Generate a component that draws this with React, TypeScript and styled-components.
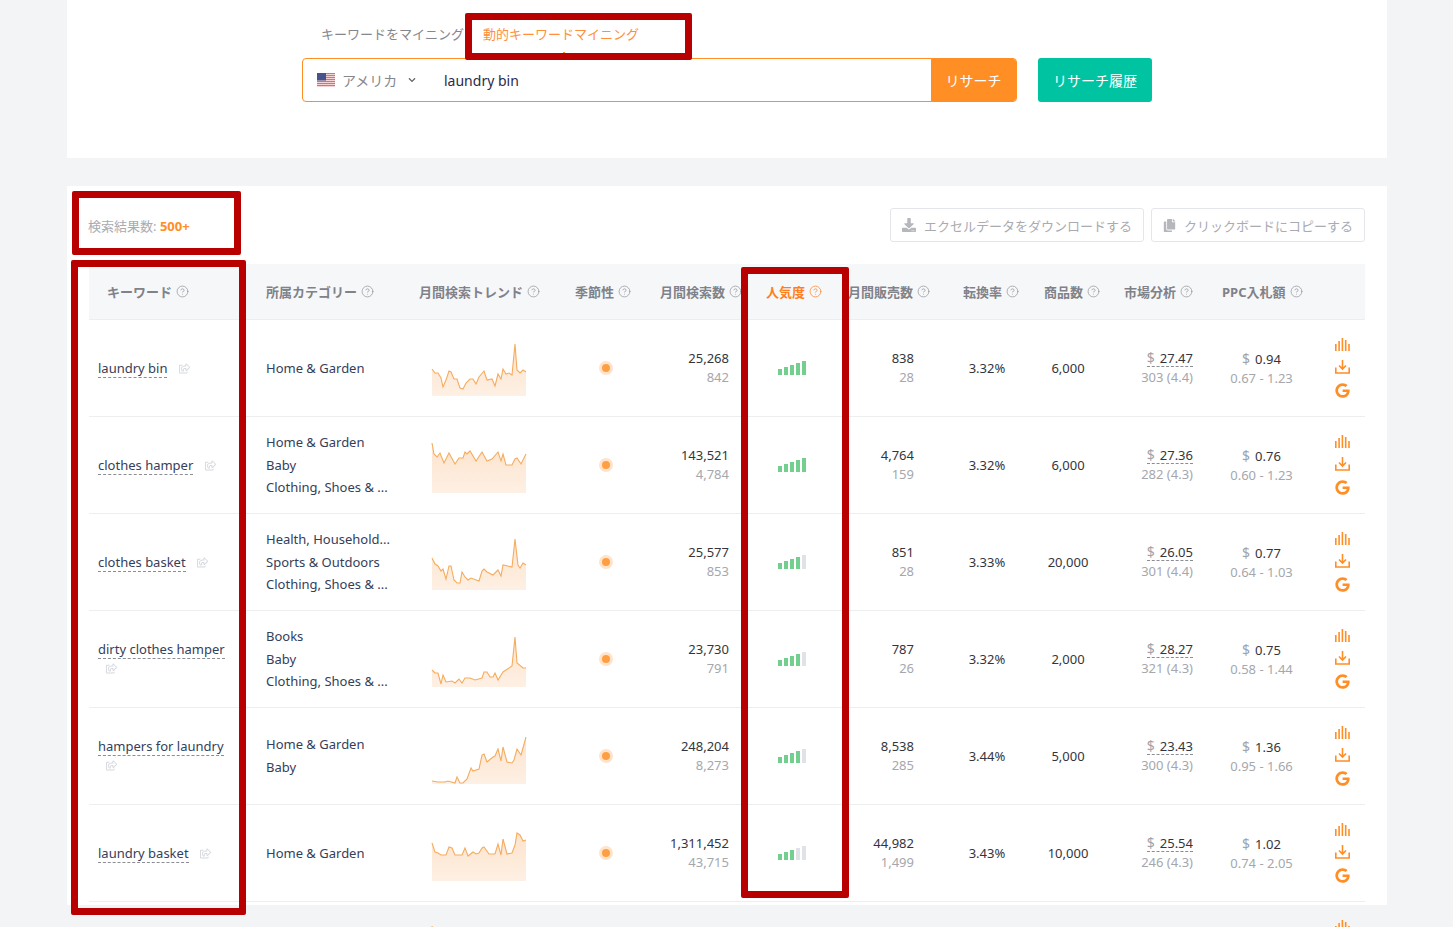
import React from "react";
import styled, { createGlobalStyle } from "styled-components";
import { CircleHelp } from "lucide-react";
import { FaChevronDown, FaCopy, FaDownload, FaGoogle, FaRegShareSquare } from "react-icons/fa";

const ORANGE = "#ff8e25";
const COLUMNS = "161px 153px 156px 94px 89px 100px 106px 82px 80px 98px 107px 50px";

const GlobalStyle = createGlobalStyle`
  html, body {
    margin: 0;
    height: 927px;
    overflow: hidden;
    background: #f3f4f6;
    font-family: "Noto Sans", "Noto Sans CJK JP", sans-serif;
    font-size: 13px;
    color: #34353c;
  }
`;

const Page = styled.div`
  position: relative;
  width: 1320px;
  margin-left: 67px;
`;

const SearchPanel = styled.section`
  height: 158px;
  background: #fff;
  box-sizing: border-box;
  padding: 24px 0 0 235px;
`;

const Tabs = styled.div`
  display: flex;
  gap: 19px;
  height: 34px;
  padding-left: 19px;
  line-height: 20px;
`;

const Tab = styled.span<{ $active?: boolean }>`
  color: ${(p) => (p.$active ? "#ff8f3a" : "#85878e")};
`;

const SearchRow = styled.div`
  display: flex;
  gap: 21px;
  height: 44px;
`;

const SearchBox = styled.div`
  width: 715px;
  display: flex;
  align-items: center;
  box-sizing: border-box;
  border: 1px solid ${ORANGE};
  border-radius: 4px;
  overflow: hidden;
`;

const Country = styled.div`
  display: flex;
  align-items: center;
  gap: 7px;
  width: 141px;
  padding-left: 14px;
  box-sizing: border-box;
  color: #85878e;
  font-size: 14px;
  & > svg:last-child {
    margin-left: 4px;
    color: #666;
  }
`;

const Query = styled.div`
  flex: 1;
  font-size: 14px;
  color: #2c2a4a;
`;

const SubmitButton = styled.button<{ $green?: boolean }>`
  height: ${(p) => (p.$green ? "44px" : "100%")};
  width: ${(p) => (p.$green ? "114px" : "85px")};
  border: none;
  border-radius: ${(p) => (p.$green ? "3px" : "0")};
  background: ${(p) => (p.$green ? "#00c4a1" : ORANGE)};
  color: #fff;
  font: inherit;
  font-size: 14px;
  padding: 0;
`;

const ResultPanel = styled.section`
  margin-top: 28px;
  background: #fff;
  padding: 22px 22px 0;
  height: 719px;
  box-sizing: border-box;
`;

const Toolbar = styled.div`
  display: flex;
  align-items: center;
  justify-content: space-between;
  height: 34px;
  margin-bottom: 22px;
`;

const ResultCount = styled.div`
  margin-left: -1px;
  color: #a9abb1;
  & > b {
    color: ${ORANGE};
    font-weight: 700;
  }
`;

const ToolButtons = styled.div`
  display: flex;
  gap: 7px;
`;

const ToolButton = styled.button`
  display: flex;
  align-items: center;
  gap: 8px;
  height: 34px;
  box-sizing: border-box;
  padding: 0 11px;
  border: 1px solid #e4e6ea;
  border-radius: 3px;
  background: #fff;
  color: #a9abb1;
  font: inherit;
  font-size: 13px;
  & > svg {
    color: #b5b7bc;
  }
`;

const HeaderRow = styled.div`
  display: grid;
  grid-template-columns: ${COLUMNS};
  align-items: center;
  height: 56px;
  background: #f6f7f9;
  border-bottom: 1px solid #eceef0;
  box-sizing: border-box;
`;

const HeadCell = styled.div<{ $pad: number; $active?: boolean }>`
  display: flex;
  align-items: center;
  gap: 4px;
  padding-left: ${(p) => p.$pad}px;
  white-space: nowrap;
  font-weight: 700;
  color: ${(p) => (p.$active ? "#ff7f1e" : "#808289")};
  & > svg {
    flex: none;
    color: ${(p) => (p.$active ? "#ff7f1e" : "#8f9197")};
  }
`;

const Row = styled.div`
  display: grid;
  grid-template-columns: ${COLUMNS};
  align-items: center;
  height: 97px;
  border-bottom: 1px solid #eceef0;
  box-sizing: border-box;
`;

const KeywordCell = styled.div`
  padding: 0 17px 0 9px;
  line-height: 19px;
`;

const Keyword = styled.span`
  color: #34405a;
  border-bottom: 1px dashed #8b8d94;
`;

const ShareIcon = styled(FaRegShareSquare)`
  margin-left: 8px;
  color: #d5d8de;
  font-size: 11px;
  vertical-align: -1px;
`;

const CategoryCell = styled.div`
  padding-left: 16px;
  line-height: 22.6px;
  white-space: nowrap;
  color: #34405a;
`;

const TrendCell = styled.div`
  padding-left: 29px;
  align-self: start;
  padding-top: 24px;
`;

const Sparkline = styled.svg`
  display: block;
  width: 94px;
  height: 52px;
  overflow: visible;
`;

const SeasonCell = styled.div`
  display: flex;
  justify-content: center;
`;

const SeasonDot = styled.span`
  width: 8px;
  height: 8px;
  border-radius: 50%;
  background: #ff9f43;
  border: 3px solid #ffe3cb;
`;

const NumberCell = styled.div<{ $right?: number; $center?: boolean }>`
  text-align: ${(p) => (p.$center ? "center" : "right")};
  padding-right: ${(p) => p.$right ?? 0}px;
  line-height: 19px;
`;

const Sub = styled.div`
  color: #a5a7ad;
`;

const BarsCell = styled.div`
  display: flex;
  justify-content: center;
  align-items: flex-end;
  gap: 2px;
`;

const Bar = styled.span<{ $level: number; $on: boolean }>`
  width: 4px;
  height: ${(p) => 6 + p.$level * 2}px;
  background: ${(p) => (p.$on ? "#72cf8d" : "#dfe2e6")};
`;

const Price = styled.span`
  display: inline-block;
  line-height: 15px;
  border-bottom: 1px dashed #8b8d94;
`;

const Dollar = styled.span`
  color: #a0a2a9;
  margin-right: 5px;
  font-size: 14px;
`;

const ActionCell = styled.div`
  display: flex;
  flex-direction: column;
  align-items: flex-start;
  gap: 9px;
  padding-left: 20px;
  color: ${ORANGE};
`;

const Mark = styled.div<{ $x: number; $y: number; $w: number; $h: number }>`
  position: absolute;
  left: ${(p) => p.$x - 67}px;
  top: ${(p) => p.$y}px;
  width: ${(p) => p.$w}px;
  height: ${(p) => p.$h}px;
  box-sizing: border-box;
  border: 7px solid #b90000;
  border-radius: 2px;
  pointer-events: none;
`;

const Caret = styled.span`
  position: absolute;
  left: ${563 - 67}px;
  top: 52px;
  width: 2px;
  height: 2px;
  background: ${ORANGE};
`;

const Flag = () => (
  <svg width="18" height="14" viewBox="0 0 18 14">
    <rect width="18" height="14" fill="#f7dfe0" />
    {[0, 2, 4, 6, 8, 10, 12].map((y) => (
      <rect key={y} y={y} width="18" height="1.1" fill="#de6f78" />
    ))}
    <rect width="9" height="7.5" fill="#47538c" />
  </svg>
);

const BarsIcon = () => (
  <svg width="15" height="13" viewBox="0 0 15 13" fill="currentColor">
    <rect x="0" y="6" width="1.6" height="7" />
    <rect x="3.3" y="3" width="1.6" height="10" />
    <rect x="6.6" y="0" width="1.6" height="13" />
    <rect x="9.9" y="2" width="1.6" height="11" />
    <rect x="13.2" y="6" width="1.6" height="7" />
  </svg>
);

const TrayIcon = () => (
  <svg width="15" height="14" viewBox="0 0 15 14" fill="none" stroke="currentColor" strokeWidth="1.6">
    <path d="M.8 7.5V13h13.4V7.5" />
    <path d="M7.5 0v8.5M4 5.5l3.5 3.5L11 5.5" />
  </svg>
);

const Help = () => <CircleHelp size={13} strokeWidth={1.3} />;

type Item = {
  keyword: string;
  categories: string[];
  volume: string;
  daily: string;
  level: number;
  sales: string;
  salesDaily: string;
  conversion: string;
  products: string;
  price: string;
  reviews: string;
  bid: string;
  range: string;
  trend: string;
};

const items: Item[] = [
  {
    keyword: "laundry bin",
    categories: ["Home & Garden"],
    volume: "25,268",
    daily: "842",
    level: 5,
    sales: "838",
    salesDaily: "28",
    conversion: "3.32%",
    products: "6,000",
    price: "27.47",
    reviews: "303 (4.4)",
    bid: "0.94",
    range: "0.67 - 1.23",
    trend: "0,25 3,29 6,29 9,34 11,43 14,36 17,27 19,28 22,35 25,35 28,44 31,45 34,39 38,35 41,35 44,40 47,33 52,27 55,36 60,35 63,42 66,30 69,35 71,25 74,30 77,29 80,31 83,0 85,26 88,29 91,26 94,28",
  },
  {
    keyword: "clothes hamper",
    categories: ["Home & Garden", "Baby", "Clothing, Shoes & ..."],
    volume: "143,521",
    daily: "4,784",
    level: 5,
    sales: "4,764",
    salesDaily: "159",
    conversion: "3.32%",
    products: "6,000",
    price: "27.36",
    reviews: "282 (4.3)",
    bid: "0.76",
    range: "0.60 - 1.23",
    trend: "0,2 2,13 5,16 8,12 12,22 17,12 23,23 27,17 31,17 33,11 35,13 38,10 44,20 50,11 55,20 60,18 66,11 69,20 71,13 74,24 80,24 83,18 85,17 89,23 94,13",
  },
  {
    keyword: "clothes basket",
    categories: ["Health, Household...", "Sports & Outdoors", "Clothing, Shoes & ..."],
    volume: "25,577",
    daily: "853",
    level: 4,
    sales: "851",
    salesDaily: "28",
    conversion: "3.33%",
    products: "20,000",
    price: "26.05",
    reviews: "301 (4.4)",
    bid: "0.77",
    range: "0.64 - 1.03",
    trend: "0,20 3,26 6,28 9,33 11,31 14,41 17,28 19,28 22,42 25,45 28,45 30,34 33,39 36,42 39,40 47,43 50,33 52,31 55,34 61,37 66,32 69,38 71,27 80,29 83,1 86,27 88,30 91,25 94,27",
  },
  {
    keyword: "dirty clothes hamper",
    categories: ["Books", "Baby", "Clothing, Shoes & ..."],
    volume: "23,730",
    daily: "791",
    level: 4,
    sales: "787",
    salesDaily: "26",
    conversion: "3.32%",
    products: "2,000",
    price: "28.27",
    reviews: "321 (4.3)",
    bid: "0.75",
    range: "0.58 - 1.44",
    trend: "0,35 3,38 6,38 9,49 11,40 14,47 20,46 23,48 27,44 30,48 33,43 38,43 43,45 50,43 52,37 55,37 58,42 61,42 63,38 66,45 71,37 80,31 83,2 85,28 91,33 94,33",
  },
  {
    keyword: "hampers for laundry",
    categories: ["Home & Garden", "Baby"],
    volume: "248,204",
    daily: "8,273",
    level: 4,
    sales: "8,538",
    salesDaily: "285",
    conversion: "3.44%",
    products: "5,000",
    price: "23.43",
    reviews: "300 (4.3)",
    bid: "1.36",
    range: "0.95 - 1.66",
    trend: "0,49 6,50 13,50 16,49 23,51 25,45 28,51 31,51 35,47 39,36 41,39 47,37 50,23 52,22 55,30 61,25 63,24 66,17 69,29 71,15 75,30 80,31 82,28 85,17 89,23 91,16 94,5",
  },
  {
    keyword: "laundry basket",
    categories: ["Home & Garden"],
    volume: "1,311,452",
    daily: "43,715",
    level: 3,
    sales: "44,982",
    salesDaily: "1,499",
    conversion: "3.43%",
    products: "10,000",
    price: "25.54",
    reviews: "246 (4.3)",
    bid: "1.02",
    range: "0.74 - 2.05",
    trend: "0,14 3,23 6,24 9,26 14,26 17,18 20,19 23,26 30,26 33,19 36,27 41,23 44,25 47,24 50,19 52,18 57,25 63,25 66,15 69,26 71,10 75,25 80,24 83,16 85,4 88,6 91,12 94,11",
  },
];

const heads: { label: string; pad: number; active?: boolean }[] = [
  { label: "キーワード", pad: 18 },
  { label: "所属カテゴリー", pad: 16 },
  { label: "月間検索トレンド", pad: 16 },
  { label: "季節性", pad: 16 },
  { label: "月間検索数", pad: 7 },
  { label: "人気度", pad: 24, active: true },
  { label: "月間販売数", pad: 6 },
  { label: "転換率", pad: 15 },
  { label: "商品数", pad: 14 },
  { label: "市場分析", pad: 14 },
  { label: "PPC入札額", pad: 14 },
];

const Trend = ({ points }: { points: string }) => (
  <Sparkline viewBox="0 0 94 52">
    <defs>
      <linearGradient id="trendFill" x1="0" y1="0" x2="0" y2="1">
        <stop offset="0" stopColor="#fde3cc" />
        <stop offset="1" stopColor="#fdf0e4" />
      </linearGradient>
    </defs>
    <polygon points={`0,52 ${points} 94,52`} fill="url(#trendFill)" />
    <polyline points={points} fill="none" stroke="#f5ac5f" strokeWidth="1.1" />
  </Sparkline>
);

export default function App() {
  return (
    <Page>
      <GlobalStyle />
      <SearchPanel>
        <Tabs>
          <Tab>キーワードをマイニング</Tab>
          <Tab $active>動的キーワードマイニング</Tab>
        </Tabs>
        <SearchRow>
          <SearchBox>
            <Country>
              <Flag />
              アメリカ
              <FaChevronDown size={8} />
            </Country>
            <Query>laundry bin</Query>
            <SubmitButton>リサーチ</SubmitButton>
          </SearchBox>
          <SubmitButton $green>リサーチ履歴</SubmitButton>
        </SearchRow>
      </SearchPanel>

      <ResultPanel>
        <Toolbar>
          <ResultCount>
            検索結果数: <b>500+</b>
          </ResultCount>
          <ToolButtons>
            <ToolButton>
              <FaDownload size={14} />
              エクセルデータをダウンロードする
            </ToolButton>
            <ToolButton>
              <FaCopy size={13} />
              クリックボードにコピーする
            </ToolButton>
          </ToolButtons>
        </Toolbar>

        <HeaderRow>
          {heads.map((h) => (
            <HeadCell key={h.label} $pad={h.pad} $active={h.active}>
              {h.label}
              <Help />
            </HeadCell>
          ))}
        </HeaderRow>

        {items.map((item) => (
          <Row key={item.keyword}>
            <KeywordCell>
              <Keyword>{item.keyword}</Keyword> <ShareIcon />
            </KeywordCell>
            <CategoryCell>
              {item.categories.map((c) => (
                <div key={c}>{c}</div>
              ))}
            </CategoryCell>
            <TrendCell>
              <Trend points={item.trend} />
            </TrendCell>
            <SeasonCell>
              <SeasonDot />
            </SeasonCell>
            <NumberCell $right={13}>
              {item.volume}
              <Sub>{item.daily}</Sub>
            </NumberCell>
            <BarsCell>
              {[0, 1, 2, 3, 4].map((i) => (
                <Bar key={i} $level={i} $on={i < item.level} />
              ))}
            </BarsCell>
            <NumberCell $right={34}>
              {item.sales}
              <Sub>{item.salesDaily}</Sub>
            </NumberCell>
            <NumberCell $center $right={4}>
              {item.conversion}
            </NumberCell>
            <NumberCell $center $right={4}>
              {item.products}
            </NumberCell>
            <NumberCell $right={15}>
              <Price>
                <Dollar>$</Dollar>
                {item.price}
              </Price>
              <Sub>{item.reviews}</Sub>
            </NumberCell>
            <NumberCell $center>
              <Dollar>$</Dollar>
              {item.bid}
              <Sub>{item.range}</Sub>
            </NumberCell>
            <ActionCell>
              <BarsIcon />
              <TrayIcon />
              <FaGoogle size={15} />
            </ActionCell>
          </Row>
        ))}

        <Row>
          <KeywordCell />
          <CategoryCell />
          <TrendCell>
            <Trend points="0,0 1,8 3,14 94,14" />
          </TrendCell>
          <SeasonCell />
          <NumberCell />
          <BarsCell />
          <NumberCell />
          <NumberCell />
          <NumberCell />
          <NumberCell />
          <NumberCell />
          <ActionCell>
            <BarsIcon />
            <TrayIcon />
            <FaGoogle size={15} />
          </ActionCell>
        </Row>
      </ResultPanel>

      <Caret />
      <Mark $x={465} $y={13} $w={227} $h={47} />
      <Mark $x={72} $y={191} $w={169} $h={64} />
      <Mark $x={71} $y={260} $w={175} $h={655} />
      <Mark $x={741} $y={267} $w={108} $h={631} />
    </Page>
  );
}
